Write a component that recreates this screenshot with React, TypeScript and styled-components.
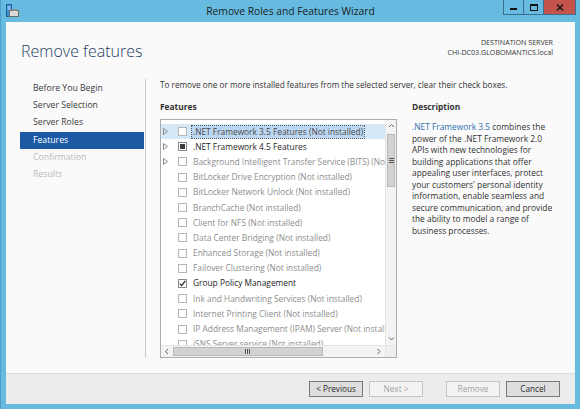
import React from "react";
import styled, { createGlobalStyle } from "styled-components";

const GlobalStyle = createGlobalStyle`
  html, body {
    margin: 0;
    padding: 0;
  }
  body {
    font-family: "Open Sans", "Noto Sans", "Liberation Sans", sans-serif;
    color: #1e1e1e;
  }
`;

const Window = styled.div`
  width: 580px;
  height: 409px;
  box-sizing: border-box;
  background: #67bbe1;
  border-left: 1px solid #4d9fca;
  display: flex;
  flex-direction: column;
`;

const TitleBar = styled.div`
  height: 22px;
  flex: none;
  display: grid;
  grid-template-columns: 1fr auto 1fr;
  align-items: start;
`;

const AppIcon = styled.div`
  padding: 4px 0 0 5px;
  line-height: 0;
`;

const Title = styled.div`
  font-size: 10.3px;
  line-height: 22px;
  color: #1b1b1b;
`;

const Controls = styled.div`
  justify-self: end;
  margin-right: 4px;
  display: flex;
`;

const CtrlButton = styled.div<{ $close?: boolean }>`
  width: ${(p) => (p.$close ? "33px" : "20px")};
  height: 15px;
  box-sizing: border-box;
  background: ${(p) => (p.$close ? "#c4544b" : "transparent")};
  border: 1px solid #3b6f8f;
  border-top: none;
  border-right: ${(p) => (p.$close ? "1px solid #3b6f8f" : "none")};
  display: flex;
  align-items: center;
  justify-content: center;
`;

const Client = styled.div`
  flex: 1;
  margin: 0 5px 5px 5px;
  background: #fafafa;
  display: flex;
  flex-direction: column;
  min-height: 0;
`;

const Header = styled.div`
  height: 57px;
  flex: none;
  display: flex;
  justify-content: space-between;
  padding: 0 22px 0 15px;
`;

const Heading = styled.h1`
  margin: 17px 0 0;
  font-size: 16px;
  font-weight: 300;
  line-height: 24px;
  color: #23405f;
`;

const Destination = styled.div`
  margin-top: 15px;
  text-align: right;
  font-size: 7.1px;
  line-height: 10px;
  color: #333;
`;

const Body = styled.div`
  flex: 1;
  display: flex;
  padding-bottom: 15px;
  min-height: 0;
`;

const Nav = styled.div`
  width: 125px;
  padding: 1px 0 0 14px;
  border-right: 1px solid #c9c9c9;
  display: flex;
  flex-direction: column;
`;

const NavItem = styled.div<{ $state: "normal" | "active" | "disabled" }>`
  height: 17.2px;
  width: 124px;
  box-sizing: border-box;
  padding-left: 13px;
  font-size: 8.7px;
  line-height: 17.2px;
  background: ${(p) => (p.$state === "active" ? "#1c5aa6" : "transparent")};
  color: ${(p) =>
    p.$state === "active" ? "#fff" : p.$state === "disabled" ? "#b9b9b9" : "#3a3a3a"};
`;

const Main = styled.div`
  flex: 1;
  padding-left: 14px;
  display: flex;
  flex-direction: column;
  min-width: 0;
`;

const Intro = styled.div`
  font-size: 8.2px;
  line-height: 11px;
  color: #333;
`;

const Columns = styled.div`
  flex: 1;
  display: flex;
  gap: 15px;
  margin-top: 12px;
  min-height: 0;
`;

const FeaturesPane = styled.div`
  width: 237px;
  display: flex;
  flex-direction: column;
`;

const Label = styled.div`
  font-size: 8.4px;
  line-height: 10px;
  font-weight: 700;
  color: #333;
`;

const ListBox = styled.div`
  flex: 1;
  margin-top: 7px;
  border: 1px solid #adadad;
  background: #fff;
  display: grid;
  grid-template-columns: 1fr 11px;
  grid-template-rows: 1fr 12px;
  min-height: 0;
`;

const Rows = styled.div`
  overflow: hidden;
  padding-top: 4px;
  min-width: 0;
`;

const Row = styled.div<{ $selected?: boolean }>`
  height: 15.2px;
  display: flex;
  align-items: center;
  padding-left: 2px;
  white-space: nowrap;
  background: ${(p) => (p.$selected ? "#d5e8f8" : "transparent")};
`;

const Expander = styled.div`
  width: 14px;
  flex: none;
  line-height: 0;
`;

const Check = styled.div<{ $dim?: boolean }>`
  width: 9px;
  height: 9px;
  flex: none;
  box-sizing: border-box;
  margin-left: 1px;
  border: 1px solid ${(p) => (p.$dim ? "#b5b5b5" : "#8a8a8a")};
  background: #fff;
  display: flex;
  align-items: center;
  justify-content: center;
`;

const Mixed = styled.div`
  width: 5px;
  height: 5px;
  background: #3d3d3d;
`;

const RowText = styled.span<{ $dim?: boolean; $selected?: boolean }>`
  margin-left: 5px;
  padding: 0 1px;
  font-size: 8.35px;
  line-height: 12px;
  color: ${(p) => (p.$selected ? "#4a4a4a" : p.$dim ? "#8d8d8d" : "#1e1e1e")};
  background: ${(p) => (p.$selected ? "#bcd7f1" : "transparent")};
  outline: ${(p) => (p.$selected ? "1px dotted #555" : "none")};
`;

const VScroll = styled.div`
  background: #f4f4f4;
  border-left: 1px solid #e4e4e4;
  display: flex;
  flex-direction: column;
`;

const HScroll = styled.div`
  background: #f4f4f4;
  border-top: 1px solid #e4e4e4;
  display: flex;
`;

const Corner = styled.div`
  background: #efefef;
  border-top: 1px solid #e4e4e4;
  border-left: 1px solid #e4e4e4;
`;

const Arrow = styled.div<{ $w: number; $h: number }>`
  width: ${(p) => p.$w}px;
  height: ${(p) => p.$h}px;
  flex: none;
  display: flex;
  align-items: center;
  justify-content: center;
`;

const Thumb = styled.div<{ $vertical?: boolean }>`
  box-sizing: border-box;
  background: #d2d2d2;
  border: 1px solid #b8b8b8;
  display: flex;
  align-items: center;
  justify-content: center;
  ${(p) =>
    p.$vertical
      ? "height: 53px; margin: 2px 1px 0;"
      : "width: 150px; margin: 1px 0;"}
`;

const Spacer = styled.div`
  flex: 1;
`;

const Description = styled.div`
  width: 150px;
`;

const DescText = styled.p`
  margin: 9px 0 0;
  font-size: 8.4px;
  line-height: 11.5px;
  color: #333;
`;

const Link = styled.span`
  color: #2f70b0;
`;

const Footer = styled.div`
  height: 31px;
  flex: none;
  box-sizing: border-box;
  background: #ececec;
  border-top: 1px solid #dcdcdc;
  display: flex;
  align-items: center;
  justify-content: flex-end;
  padding-right: 15px;
`;

const Button = styled.div<{ $disabled?: boolean; $gap?: number }>`
  width: 54px;
  height: 16px;
  box-sizing: border-box;
  margin-left: ${(p) => p.$gap ?? 6}px;
  border: 1px solid ${(p) => (p.$disabled ? "#c4c4c4" : "#7a7a7a")};
  background: ${(p) => (p.$disabled ? "#f3f3f3" : "#dedede")};
  color: ${(p) => (p.$disabled ? "#a3a3a3" : "#2a2a2a")};
  font-size: 8.2px;
  line-height: 14px;
  text-align: center;
`;

type Feature = {
  name: string;
  expand?: boolean;
  state: "off" | "mixed" | "on";
  dim?: boolean;
  selected?: boolean;
};

const features: Feature[] = [
  { name: ".NET Framework 3.5 Features (Not installed)", expand: true, state: "off", dim: true, selected: true },
  { name: ".NET Framework 4.5 Features", expand: true, state: "mixed" },
  { name: "Background Intelligent Transfer Service (BITS) (Not installed)", expand: true, state: "off", dim: true },
  { name: "BitLocker Drive Encryption (Not installed)", state: "off", dim: true },
  { name: "BitLocker Network Unlock (Not installed)", state: "off", dim: true },
  { name: "BranchCache (Not installed)", state: "off", dim: true },
  { name: "Client for NFS (Not installed)", state: "off", dim: true },
  { name: "Data Center Bridging (Not installed)", state: "off", dim: true },
  { name: "Enhanced Storage (Not installed)", state: "off", dim: true },
  { name: "Failover Clustering (Not installed)", state: "off", dim: true },
  { name: "Group Policy Management", state: "on" },
  { name: "Ink and Handwriting Services (Not installed)", state: "off", dim: true },
  { name: "Internet Printing Client (Not installed)", state: "off", dim: true },
  { name: "IP Address Management (IPAM) Server (Not installed)", state: "off", dim: true },
  { name: "iSNS Server service (Not installed)", state: "off", dim: true },
];

const navItems: { label: string; state: "normal" | "active" | "disabled" }[] = [
  { label: "Before You Begin", state: "normal" },
  { label: "Server Selection", state: "normal" },
  { label: "Server Roles", state: "normal" },
  { label: "Features", state: "active" },
  { label: "Confirmation", state: "disabled" },
  { label: "Results", state: "disabled" },
];

const Triangle = () => (
  <svg width="5" height="7" viewBox="0 0 5 7">
    <path d="M0.5 0.5 L4.5 3.5 L0.5 6.5 Z" fill="none" stroke="#8a8a8a" strokeWidth="1" />
  </svg>
);

const Tick = () => (
  <svg width="7" height="7" viewBox="0 0 7 7">
    <path d="M0.8 3.6 L2.7 5.6 L6.3 0.9" fill="none" stroke="#222" strokeWidth="1.3" />
  </svg>
);

const Chevron = ({ dir }: { dir: "up" | "down" | "left" | "right" }) => {
  const d = {
    up: "M1 4 L3.5 1.5 L6 4",
    down: "M1 1.5 L3.5 4 L6 1.5",
    left: "M4 1 L1.5 3.5 L4 6",
    right: "M1.5 1 L4 3.5 L1.5 6",
  }[dir];
  const vertical = dir === "up" || dir === "down";
  return (
    <svg width={vertical ? 7 : 6} height={vertical ? 6 : 7} viewBox={vertical ? "0 0 7 6" : "0 0 6 7"}>
      <path d={d} fill="none" stroke="#606060" strokeWidth="1" />
    </svg>
  );
};

const Grip = ({ vertical }: { vertical?: boolean }) =>
  vertical ? (
    <svg width="5" height="6" viewBox="0 0 5 6">
      <path d="M0 0.5 H5 M0 2.5 H5 M0 4.5 H5" stroke="#555" strokeWidth="1" />
    </svg>
  ) : (
    <svg width="6" height="5" viewBox="0 0 6 5">
      <path d="M0.5 0 V5 M2.5 0 V5 M4.5 0 V5" stroke="#555" strokeWidth="1" />
    </svg>
  );

const WizardIcon = () => (
  <svg width="13" height="14" viewBox="0 0 13 14">
    <rect x="0.5" y="0.5" width="5" height="12" fill="#3a8fd6" stroke="#1f5f9c" />
    <path d="M1.5 3 H4.5 M1.5 5 H4.5" stroke="#cfe6fa" />
    <rect x="3.5" y="6.5" width="9" height="6" fill="#d9d9d9" stroke="#6d6d6d" />
    <rect x="5.5" y="5" width="5" height="2" fill="#8a8a8a" />
  </svg>
);

export default function App() {
  return (
    <>
      <GlobalStyle />
      <Window>
        <TitleBar>
          <AppIcon>
            <WizardIcon />
          </AppIcon>
          <Title>Remove Roles and Features Wizard</Title>
          <Controls>
            <CtrlButton>
              <svg width="7" height="7" viewBox="0 0 7 7">
                <rect x="0" y="4" width="7" height="2" fill="#111" />
              </svg>
            </CtrlButton>
            <CtrlButton>
              <svg width="8" height="7" viewBox="0 0 8 7">
                <rect x="0.5" y="0.5" width="7" height="6" fill="none" stroke="#111" />
                <rect x="0" y="0" width="8" height="2" fill="#111" />
              </svg>
            </CtrlButton>
            <CtrlButton $close>
              <svg width="8" height="7" viewBox="0 0 8 7">
                <path d="M1 0.5 L7 6.5 M7 0.5 L1 6.5" stroke="#1a1a1a" strokeWidth="1.6" />
              </svg>
            </CtrlButton>
          </Controls>
        </TitleBar>

        <Client>
          <Header>
            <Heading>Remove features</Heading>
            <Destination>
              DESTINATION SERVER
              <br />
              CHI-DC03.GLOBOMANTICS.local
            </Destination>
          </Header>

          <Body>
            <Nav>
              {navItems.map((n) => (
                <NavItem key={n.label} $state={n.state}>
                  {n.label}
                </NavItem>
              ))}
            </Nav>

            <Main>
              <Intro>
                To remove one or more installed features from the selected server, clear their check boxes.
              </Intro>
              <Columns>
                <FeaturesPane>
                  <Label>Features</Label>
                  <ListBox>
                    <Rows>
                      {features.map((f) => (
                        <Row key={f.name} $selected={f.selected}>
                          <Expander>{f.expand && <Triangle />}</Expander>
                          <Check $dim={f.dim}>
                            {f.state === "mixed" && <Mixed />}
                            {f.state === "on" && <Tick />}
                          </Check>
                          <RowText $dim={f.dim} $selected={f.selected}>
                            {f.name}
                          </RowText>
                        </Row>
                      ))}
                    </Rows>
                    <VScroll>
                      <Arrow $w={10} $h={12}>
                        <Chevron dir="up" />
                      </Arrow>
                      <Thumb $vertical>
                        <Grip vertical />
                      </Thumb>
                      <Spacer />
                      <Arrow $w={10} $h={12}>
                        <Chevron dir="down" />
                      </Arrow>
                    </VScroll>
                    <HScroll>
                      <Arrow $w={12} $h={11}>
                        <Chevron dir="left" />
                      </Arrow>
                      <Thumb>
                        <Grip />
                      </Thumb>
                      <Spacer />
                      <Arrow $w={12} $h={11}>
                        <Chevron dir="right" />
                      </Arrow>
                    </HScroll>
                    <Corner />
                  </ListBox>
                </FeaturesPane>

                <Description>
                  <Label>Description</Label>
                  <DescText>
                    <Link>.NET Framework 3.5</Link> combines the
                    <br />
                    power of the .NET Framework 2.0
                    <br />
                    APIs with new technologies for
                    <br />
                    building applications that offer
                    <br />
                    appealing user interfaces, protect
                    <br />
                    your customers' personal identity
                    <br />
                    information, enable seamless and
                    <br />
                    secure communication, and provide
                    <br />
                    the ability to model a range of
                    <br />
                    business processes.
                  </DescText>
                </Description>
              </Columns>
            </Main>
          </Body>

          <Footer>
            <Button>&lt; Previous</Button>
            <Button $disabled>Next &gt;</Button>
            <Button $disabled $gap={23}>
              Remove
            </Button>
            <Button>Cancel</Button>
          </Footer>
        </Client>
      </Window>
    </>
  );
}
